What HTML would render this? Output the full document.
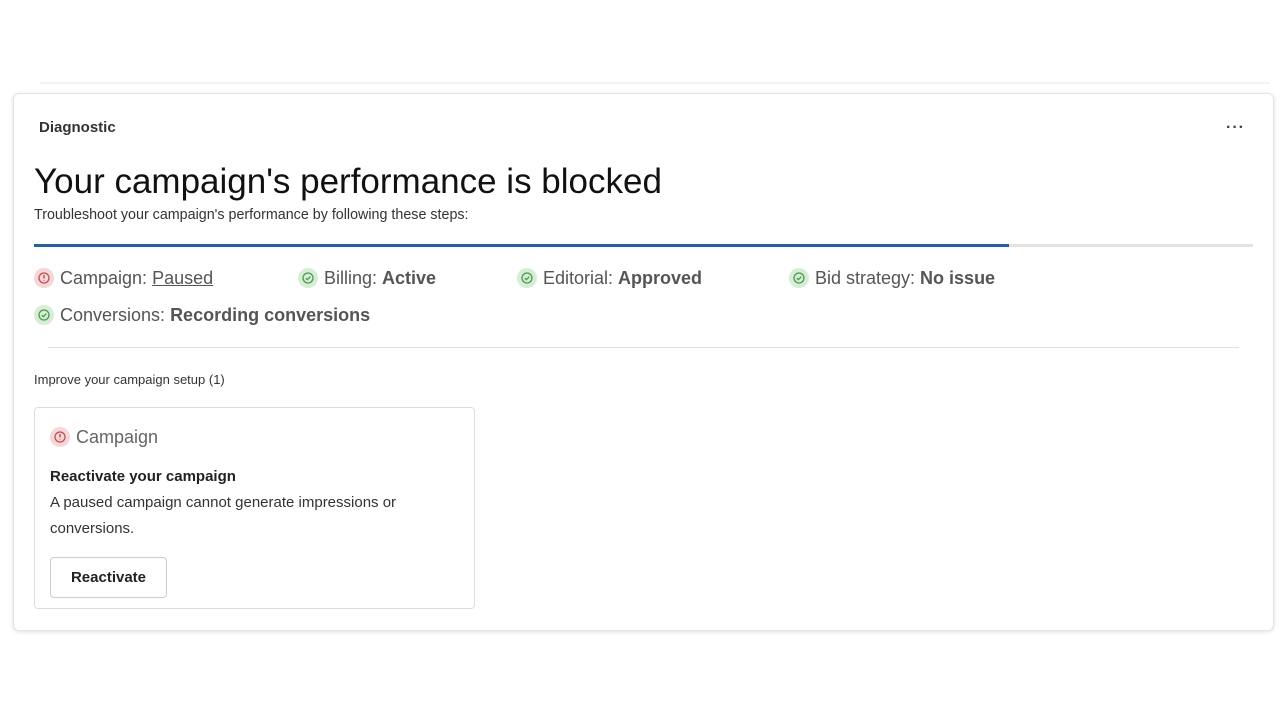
<!DOCTYPE html>
<html><head><style>
body{margin:0;background:#fff;font-family:"Liberation Sans",sans-serif;width:1280px;height:720px;position:relative;overflow:hidden;color:#222}
.a{position:absolute;white-space:nowrap}
.card{position:absolute;left:13px;top:93px;width:1259px;height:536px;border:1px solid #e4e4e4;border-radius:6px;box-shadow:0 1px 4px rgba(0,0,0,.12);background:#fff}
.st{font-size:18px;color:#555}
.st b{font-weight:bold;color:#555}
.ic{display:inline-block;width:20px;height:20px;border-radius:50%;vertical-align:-4px;margin-right:6px;position:relative}
.g{background:#d6eed6}.r{background:#f6d6d8}
.ic svg{position:absolute;left:4px;top:4px}
</style></head><body>
<div class="a" style="left:40px;top:82px;width:1230px;height:2px;background:#f3f3f3"></div>
<div class="card">
<div class="a" style="left:25px;top:25px;font-size:15px;font-weight:bold;color:#333">Diagnostic</div>
<div class="a" style="left:1212px;top:25px;font-size:16px;font-weight:bold;color:#444;letter-spacing:1px">···</div>
<div class="a" style="left:20px;top:68px;font-size:35px;color:#111">Your campaign's performance is blocked</div>
<div class="a" style="left:20px;top:113px;font-size:14.3px;color:#333">Troubleshoot your campaign's performance by following these steps:</div>
<div class="a" style="left:20px;top:150px;width:1219px;height:3px;background:#e3e3e3"></div>
<div class="a" style="left:20px;top:150px;width:975px;height:3px;background:#1f5fb4"></div>
<div class="a st" style="left:20px;top:174px"><span class="ic r"><svg width="12" height="12" viewBox="0 0 12 12"><circle cx="6" cy="6" r="5" fill="none" stroke="#c0504d" stroke-width="1.3"/><path d="M6 3v3.5M6 8.3v.5" stroke="#c0504d" stroke-width="1.4"/></svg></span>Campaign: <span style="text-decoration:underline">Paused</span></div>
<div class="a st" style="left:284px;top:174px"><span class="ic g"><svg width="12" height="12" viewBox="0 0 12 12"><circle cx="6" cy="6" r="5" fill="none" stroke="#4a9a4a" stroke-width="1.3"/><path d="M3.8 6.2l1.5 1.5 3-3" fill="none" stroke="#4a9a4a" stroke-width="1.3"/></svg></span>Billing: <b>Active</b></div>
<div class="a st" style="left:503px;top:174px"><span class="ic g"><svg width="12" height="12" viewBox="0 0 12 12"><circle cx="6" cy="6" r="5" fill="none" stroke="#4a9a4a" stroke-width="1.3"/><path d="M3.8 6.2l1.5 1.5 3-3" fill="none" stroke="#4a9a4a" stroke-width="1.3"/></svg></span>Editorial: <b>Approved</b></div>
<div class="a st" style="left:775px;top:174px"><span class="ic g"><svg width="12" height="12" viewBox="0 0 12 12"><circle cx="6" cy="6" r="5" fill="none" stroke="#4a9a4a" stroke-width="1.3"/><path d="M3.8 6.2l1.5 1.5 3-3" fill="none" stroke="#4a9a4a" stroke-width="1.3"/></svg></span>Bid strategy: <b>No issue</b></div>
<div class="a st" style="left:20px;top:211px"><span class="ic g"><svg width="12" height="12" viewBox="0 0 12 12"><circle cx="6" cy="6" r="5" fill="none" stroke="#4a9a4a" stroke-width="1.3"/><path d="M3.8 6.2l1.5 1.5 3-3" fill="none" stroke="#4a9a4a" stroke-width="1.3"/></svg></span>Conversions: <b>Recording conversions</b></div>
<div class="a" style="left:34px;top:253px;width:1191px;height:1px;background:#e0e0e0"></div>
<div class="a" style="left:20px;top:278px;font-size:13px;color:#333">Improve your campaign setup (1)</div>
<div class="a" style="left:20px;top:313px;width:439px;height:200px;border:1px solid #ddd;border-radius:4px">
<div class="a st" style="left:15px;top:19px;color:#666"><span class="ic r"><svg width="12" height="12" viewBox="0 0 12 12"><circle cx="6" cy="6" r="5" fill="none" stroke="#c0504d" stroke-width="1.3"/><path d="M6 3v3.5M6 8.3v.5" stroke="#c0504d" stroke-width="1.4"/></svg></span>Campaign</div>
<div class="a" style="left:15px;top:60px;font-size:15px;font-weight:bold;color:#222">Reactivate your campaign</div>
<div class="a" style="left:15px;top:82px;font-size:15px;color:#333;line-height:26px;white-space:normal;width:410px">A paused campaign cannot generate impressions or conversions.</div>
<div class="a" style="left:15px;top:149px;width:115px;height:39px;border:1px solid #ccc;border-radius:4px;font-size:15px;font-weight:bold;text-align:center;line-height:39px;color:#222">Reactivate</div>
</div>
</div>
</body></html>
